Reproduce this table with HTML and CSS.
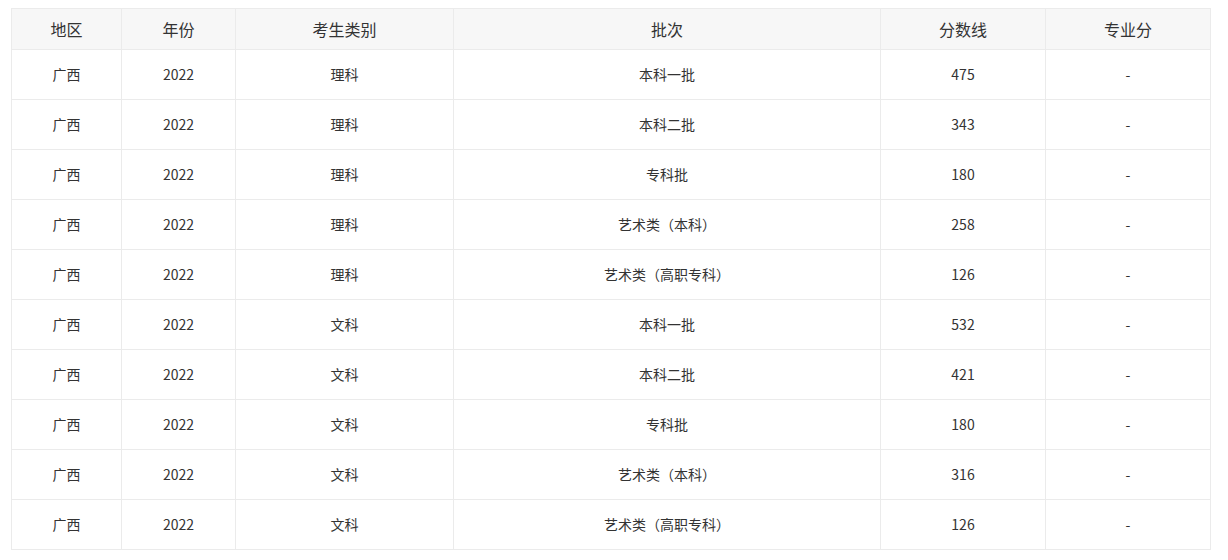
FILE: index.html
```html
<!DOCTYPE html>
<html lang="zh">
<head>
<meta charset="utf-8">
<link rel="stylesheet" href="styles.css">
</head>
<body>
<table class="score-table">
  <colgroup>
    <col class="c1"><col class="c2"><col class="c3"><col class="c4"><col class="c5"><col class="c6">
  </colgroup>
  <thead>
    <tr><th>地区</th><th>年份</th><th>考生类别</th><th>批次</th><th>分数线</th><th>专业分</th></tr>
  </thead>
  <tbody>
    <tr><td>广西</td><td>2022</td><td>理科</td><td>本科一批</td><td>475</td><td>-</td></tr>
    <tr><td>广西</td><td>2022</td><td>理科</td><td>本科二批</td><td>343</td><td>-</td></tr>
    <tr><td>广西</td><td>2022</td><td>理科</td><td>专科批</td><td>180</td><td>-</td></tr>
    <tr><td>广西</td><td>2022</td><td>理科</td><td>艺术类（本科）</td><td>258</td><td>-</td></tr>
    <tr><td>广西</td><td>2022</td><td>理科</td><td>艺术类（高职专科）</td><td>126</td><td>-</td></tr>
    <tr><td>广西</td><td>2022</td><td>文科</td><td>本科一批</td><td>532</td><td>-</td></tr>
    <tr><td>广西</td><td>2022</td><td>文科</td><td>本科二批</td><td>421</td><td>-</td></tr>
    <tr><td>广西</td><td>2022</td><td>文科</td><td>专科批</td><td>180</td><td>-</td></tr>
    <tr><td>广西</td><td>2022</td><td>文科</td><td>艺术类（本科）</td><td>316</td><td>-</td></tr>
    <tr><td>广西</td><td>2022</td><td>文科</td><td>艺术类（高职专科）</td><td>126</td><td>-</td></tr>
  </tbody>
</table>
</body>
</html>
```
FILE: styles.css
```css
html, body {
  margin: 0;
  padding: 0;
  background: #ffffff;
}
body {
  padding: 8px 0 0 11px;
  font-family: "Noto Sans CJK SC", "Noto Sans", sans-serif;
  color: #333333;
}
.score-table {
  width: 1199px;
  border-collapse: collapse;
  table-layout: fixed;
}
.c1 { width: 110px; }
.c2 { width: 114px; }
.c3 { width: 218px; }
.c4 { width: 427px; }
.c5 { width: 165px; }
.c6 { width: 165px; }
.score-table th,
.score-table td {
  border: 1px solid #ebebeb;
  text-align: center;
  padding: 0;
  vertical-align: middle;
}
.score-table th {
  height: 40px;
  background: #f7f7f7;
  font-size: 16px;
  font-weight: normal;
  color: #333333;
}
.score-table td {
  height: 48px;
  padding-bottom: 1px;
  font-size: 14px;
  color: #333333;
}
```
